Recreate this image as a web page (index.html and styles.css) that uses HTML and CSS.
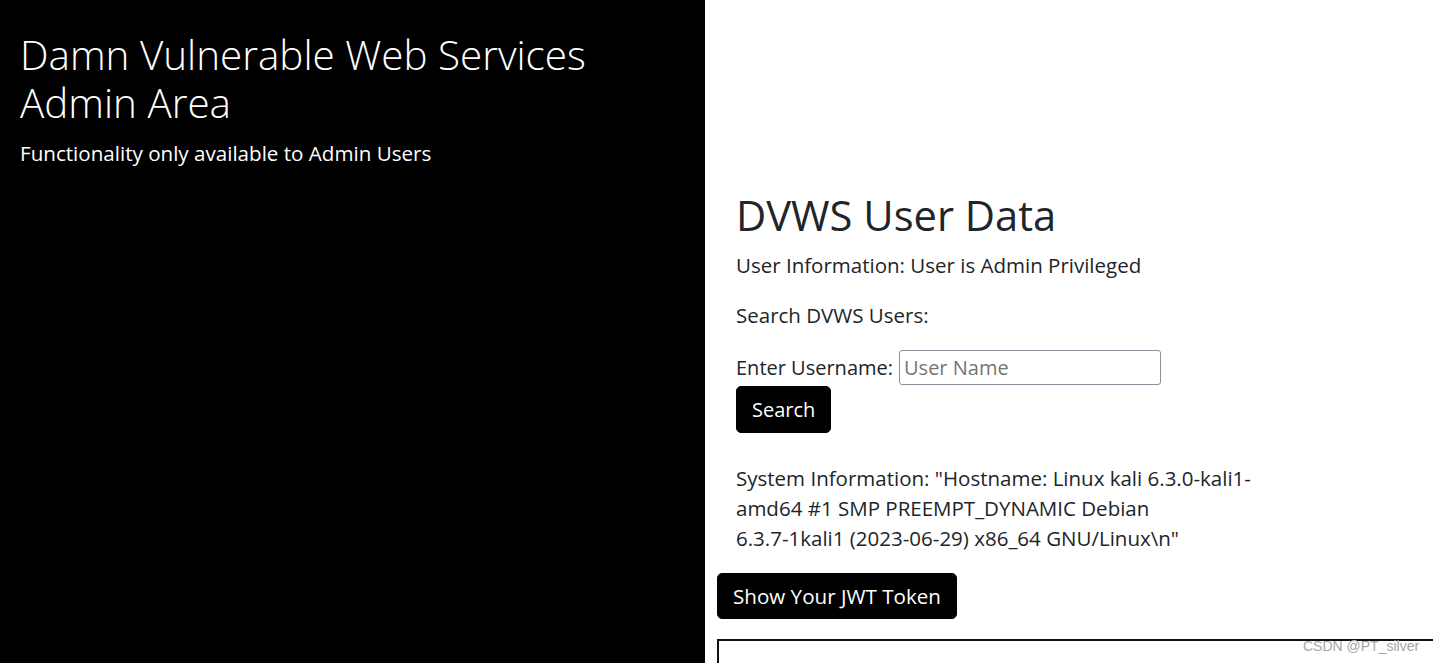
FILE: index.html
```html
<!DOCTYPE html>
<html>
<head>
<meta charset="utf-8">
<title>DVWS Admin Area</title>
<link rel="stylesheet" href="styles.css">
</head>
<body>
<div class="page">
  <aside class="side">
    <h1 class="side-title">Damn Vulnerable Web Services<br>Admin Area</h1>
    <p class="side-sub">Functionality only available to Admin Users</p>
  </aside>
  <main class="main">
    <div class="content">
      <h2 class="title">DVWS User Data</h2>
      <p class="info">User Information: User is Admin Privileged</p>
      <p class="info">Search DVWS Users:</p>
      <form class="search-form" onsubmit="return false">
        <div class="field">
          <label class="label" for="username">Enter Username:</label>
          <input class="input" id="username" type="text" placeholder="User Name">
        </div>
        <button class="btn" type="submit">Search</button>
      </form>
      <p class="sysinfo">System Information: "Hostname: Linux kali 6.3.0-kali1-amd64 #1 SMP PREEMPT_DYNAMIC Debian <span class="nobr">6.3.7-1kali1</span> (2023-06-29) x86_64 GNU/Linux\n"</p>
    </div>
    <button class="btn btn-jwt" type="button">Show Your JWT Token</button>
    <div class="token-box"></div>
  </main>
</div>
<div class="watermark">CSDN @PT_silver</div>
</body>
</html>
```
FILE: styles.css
```css
html, body {
  margin: 0;
  height: 100%;
  overflow: hidden;
}
body {
  font-family: "Open Sans", "Noto Sans", sans-serif;
  background: #fff;
  color: #212529;
}
.page {
  display: flex;
  height: 100vh;
  overflow: hidden;
}
.side {
  width: 705px;
  flex: 0 0 705px;
  background: #000;
  color: #fff;
  padding: 31px 0 0 20px;
  box-sizing: border-box;
}
.side-title {
  margin: 0;
  font-size: 40.4px;
  font-weight: 300;
  line-height: 48px;
}
.side-sub {
  margin: 11px 0 0;
  font-size: 20.6px;
  line-height: 30px;
}
.main {
  flex: 1;
  min-width: 0;
  overflow: hidden;
  padding: 191px 0 0 12px;
}
.content {
  padding-left: 19px;
  width: 522px;
}
.title {
  margin: 0 0 11px;
  font-size: 41.7px;
  font-weight: 500;
  line-height: 48px;
  color: #212529;
}
.info {
  margin: 0 0 20px;
  font-size: 20.5px;
  line-height: 30px;
}
.search-form {
  margin: 0;
}
.field {
  display: flex;
  align-items: center;
  height: 35px;
}
.label {
  font-size: 20px;
  line-height: 30px;
}
.input {
  margin-left: 6px;
  width: 262px;
  height: 35px;
  box-sizing: border-box;
  border: 1px solid #8f8f9d;
  border-radius: 3px;
  padding: 0 4px;
  font-family: "Open Sans", sans-serif;
  font-size: 20px;
  color: #212529;
  background: #fff;
}
.input::placeholder {
  color: #757575;
}
.btn {
  display: block;
  margin: 1px 0 0;
  padding: 7.5px 15px;
  border: 1px solid #000;
  border-radius: 5px;
  background: #000;
  color: #fff;
  font-family: "Open Sans", sans-serif;
  font-size: 20px;
  line-height: 30px;
}
.sysinfo {
  margin: 30px 0 0;
  font-size: 20.5px;
  line-height: 30px;
}
.nobr {
  white-space: nowrap;
}
.btn-jwt {
  margin-top: 20px;
  padding: 7px 15px;
  font-size: 20.6px;
}
.token-box {
  margin-top: 20px;
  width: 760px;
  height: 200px;
  border: 2px solid #111;
  box-sizing: border-box;
}
.watermark {
  position: absolute;
  left: 1303px;
  top: 638px;
  font-family: "Liberation Sans", Arial, sans-serif;
  font-size: 14px;
  color: #a6a6a6;
}
```
